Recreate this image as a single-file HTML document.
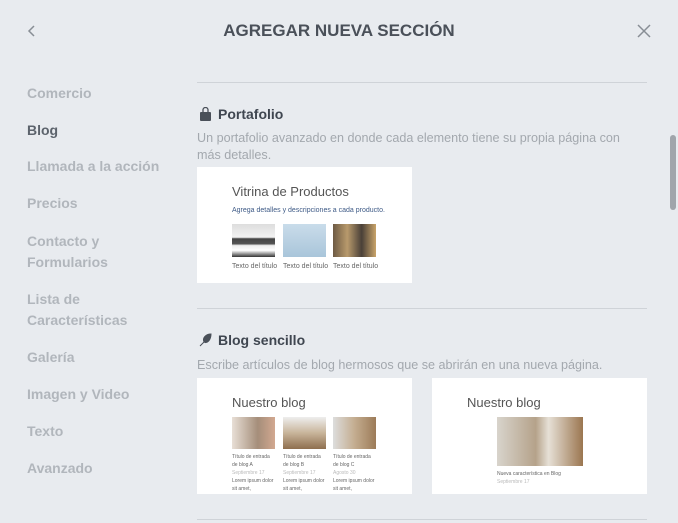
<!DOCTYPE html>
<html><head><meta charset="utf-8"><style>
*{margin:0;padding:0;box-sizing:border-box}
body{width:678px;height:523px;background:#e8ebef;font-family:"Liberation Sans",sans-serif;position:relative;overflow:hidden}
.a{position:absolute}
.nav{left:27px;font-size:14px;font-weight:bold;color:#b1b6bc;line-height:21px}
.hr{height:1px;background:#cfd3d8;left:197px;width:450px}
.card{background:#fff;overflow:hidden}
.t{font-size:10px;color:#666;position:absolute}
.desc{left:197px;font-size:12.6px;color:#a3a8ae;line-height:17px}
h2{position:absolute;left:218px;font-size:14px;color:#3f4650}
</style></head><body>
<svg class="a" style="left:26px;top:24px" width="12" height="14"><path d="M8 2 L3 7 L8 12" stroke="#888e95" stroke-width="1.5" fill="none"/></svg>
<div class="a" style="left:0;width:678px;top:21px;text-align:center;font-size:17px;font-weight:bold;color:#4a5059;letter-spacing:0">AGREGAR NUEVA SECCIÓN</div>
<svg class="a" style="left:637px;top:24px" width="14" height="14"><path d="M1 1 L13 13 M13 1 L1 13" stroke="#888e95" stroke-width="1.5"/></svg>
<div class="a nav" style="top:83px">Comercio</div>
<div class="a nav" style="top:120px;color:#5c636c">Blog</div>
<div class="a nav" style="top:156px">Llamada a la acción</div>
<div class="a nav" style="top:193px">Precios</div>
<div class="a nav" style="top:231px">Contacto y<br>Formularios</div>
<div class="a nav" style="top:289px">Lista de<br>Características</div>
<div class="a nav" style="top:347px">Galería</div>
<div class="a nav" style="top:384px">Imagen y Video</div>
<div class="a nav" style="top:421px">Texto</div>
<div class="a nav" style="top:458px">Avanzado</div>
<div class="a" style="left:670px;top:135px;width:6px;height:75px;border-radius:3px;background:#a0a5ab"></div>
<div class="a hr" style="top:82px"></div>
<svg class="a" style="left:199px;top:107px" width="13" height="14"><path d="M4 5 V3 a2.5 2.5 0 0 1 5 0 V5" stroke="#4a5059" fill="none" stroke-width="1.3"/><rect x="1" y="5" width="11" height="9" rx="1" fill="#4a5059"/></svg>
<h2 style="top:106px">Portafolio</h2>
<div class="a desc" style="top:130px">Un portafolio avanzado en donde cada elemento tiene su propia página con<br>más detalles.</div>
<div class="a card" style="left:197px;top:167px;width:215px;height:116px">
<div class="a" style="left:35px;top:17px;font-size:13px;color:#555">Vitrina de Productos</div>
<div class="a" style="left:35px;top:40px;font-size:7px;color:#3e5a86">Agrega detalles y descripciones a cada producto.</div>
<div class="a" style="left:35px;top:57px;width:43px;height:33px;background:linear-gradient(#ddd,#f2f2f2 40%,#444 45%,#555 60%,#eee 65%,#fff 80%,#333)"></div>
<div class="a" style="left:86px;top:57px;width:43px;height:33px;background:linear-gradient(#c9dcea,#a9c5da)"></div>
<div class="a" style="left:136px;top:57px;width:43px;height:33px;background:linear-gradient(90deg,#6d5a44,#b89a6c,#4a4038,#c9a46a)"></div>
<div class="t" style="left:35px;top:96px;font-size:7px">Texto del título</div>
<div class="t" style="left:86px;top:96px;font-size:7px">Texto del título</div>
<div class="t" style="left:136px;top:96px;font-size:7px">Texto del título</div>
</div>
<div class="a hr" style="top:308px"></div>
<svg class="a" style="left:199px;top:333px" width="13" height="14"><path d="M1 13 L5 9 C3 5 7 1 12 1 C12 7 8 11 5 9" fill="#4a5059" stroke="#4a5059"/></svg>
<h2 style="top:332px">Blog sencillo</h2>
<div class="a desc" style="top:357px">Escribe artículos de blog hermosos que se abrirán en una nueva página.</div>
<div class="a card" style="left:197px;top:378px;width:215px;height:116px">
<div class="a" style="left:35px;top:17px;font-size:13px;color:#555">Nuestro blog</div>
<div class="a" style="left:35px;top:39px;width:43px;height:32px;background:linear-gradient(90deg,#e8dfd6,#a58e7a 60%,#d2a890)"></div>
<div class="a" style="left:86px;top:39px;width:43px;height:32px;background:linear-gradient(#eee,#c8b49a 50%,#8e6f4f)"></div>
<div class="a" style="left:136px;top:39px;width:43px;height:32px;background:linear-gradient(90deg,#ddd,#c4ad90,#9c7b58)"></div>
<div class="t" style="left:35px;top:75px;font-size:5px;line-height:8px;width:42px">Título de entrada de blog A<br><span style="color:#bbb">Septiembre 17</span><br>Lorem ipsum dolor sit amet, consectetur</div>
<div class="t" style="left:86px;top:75px;font-size:5px;line-height:8px;width:42px">Título de entrada de blog B<br><span style="color:#bbb">Septiembre 17</span><br>Lorem ipsum dolor sit amet, consectetur</div>
<div class="t" style="left:136px;top:75px;font-size:5px;line-height:8px;width:42px">Título de entrada de blog C<br><span style="color:#bbb">Agosto 30</span><br>Lorem ipsum dolor sit amet, consectetur</div>
</div>
<div class="a card" style="left:432px;top:378px;width:215px;height:116px">
<div class="a" style="left:35px;top:17px;font-size:13px;color:#555">Nuestro blog</div>
<div class="a" style="left:65px;top:39px;width:86px;height:49px;background:linear-gradient(90deg,#d8d4cc,#b5a28a 45%,#e6e0d6 60%,#9b7650)"></div>
<div class="t" style="left:65px;top:92px;font-size:5px;line-height:8px">Nueva característica en Blog<br><span style="color:#bbb">Septiembre 17</span></div>
</div>
<div class="a hr" style="top:519px"></div>
</body></html>
